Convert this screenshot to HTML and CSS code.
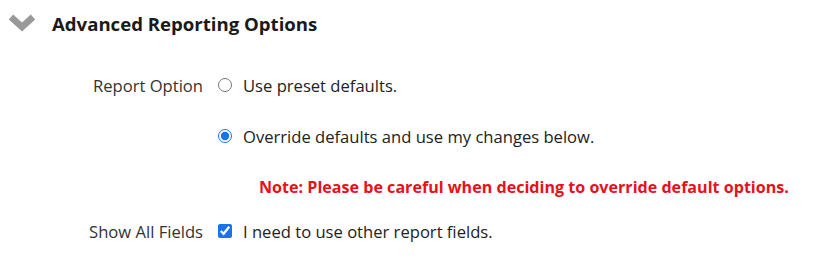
FILE: index.html
```html
<!DOCTYPE html>
<html lang="en">
<head>
  <meta charset="UTF-8">
  <title>Advanced Reporting Options</title>
  <link rel="stylesheet" href="styles.css">
</head>
<body>
  <div class="section-header">
    <svg class="chevron" width="30" height="20" viewBox="0 0 30 20">
      <path d="M4 4 L15 14 L26 4" fill="none" stroke="#999" stroke-width="6.5" stroke-linejoin="miter"/>
    </svg>
    <h2>Advanced Reporting Options</h2>
  </div>

  <div class="options">
    <div class="row">
      <div class="label">Report Option</div>
      <label class="choice"><input type="radio" name="report-option"> Use preset defaults.</label>
    </div>
    <div class="row">
      <div class="label"></div>
      <label class="choice"><input type="radio" name="report-option" checked> Override defaults and use my changes below.</label>
    </div>
    <div class="note">Note: Please be careful when deciding to override default options.</div>
    <div class="row">
      <div class="label">Show All Fields</div>
      <label class="choice"><input type="checkbox" checked> I need to use other report fields.</label>
    </div>
  </div>
</body>
</html>
```

FILE: styles.css
```css
body {
  font-family: "Open Sans", Arial, sans-serif;
  margin: 0;
  padding: 0;
  background-color: #fff;
  color: #222;
}

.section-header {
  display: flex;
  align-items: center;
  height: 46px;
  padding-left: 7px;
}

.chevron {
  margin-right: 15px;
}

.section-header h2 {
  margin: 0;
  font-size: 18.6px;
  font-weight: 700;
  color: #1a1a1a;
}

.options {
  padding-top: 27px;
}

.row {
  display: flex;
  align-items: center;
  height: 24px;
  margin-bottom: 27px;
  font-size: 16.6px;
}

.label {
  width: 203px;
  text-align: right;
  color: #333;
}

.choice {
  display: flex;
  align-items: center;
  margin-left: 15px;
}

.choice input {
  width: 14px;
  height: 14px;
  margin: 0 11px 0 0;
  accent-color: #1a73e8;
}

.note {
  height: 24px;
  line-height: 24px;
  margin-bottom: 20px;
  padding-left: 259px;
  font-size: 16.1px;
  font-weight: 700;
  color: #e8101a;
}
```
